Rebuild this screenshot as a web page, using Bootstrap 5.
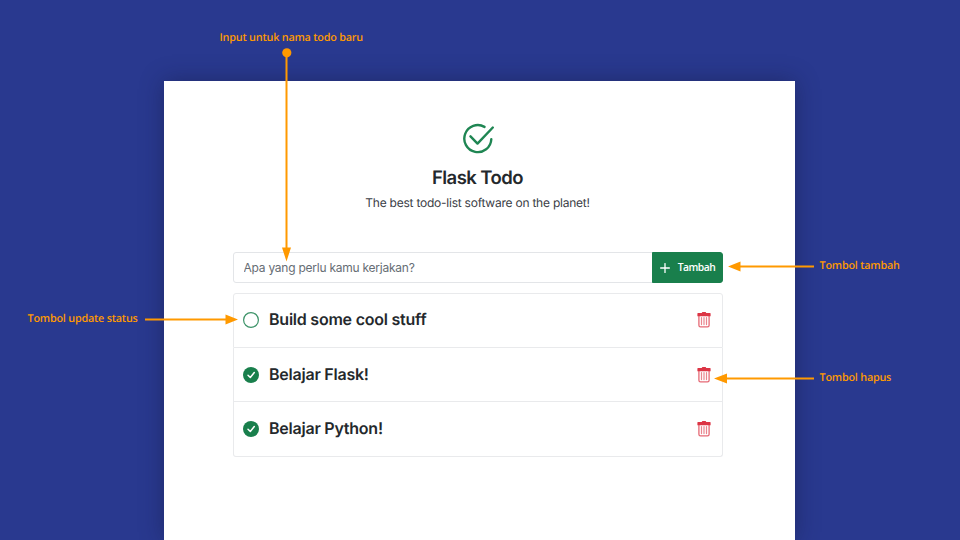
<!DOCTYPE html>
<html lang="id">
<head>
<meta charset="utf-8">
<meta name="viewport" content="width=device-width, initial-scale=1">
<title>Flask Todo</title>
<link href="https://cdn.jsdelivr.net/npm/bootstrap@5.3.0/dist/css/bootstrap.min.css" rel="stylesheet">
<style>
body{width:960px;height:540px;background:#29398f;font-family:Inter,"Liberation Sans",sans-serif;overflow:hidden;text-rendering:geometricPrecision}
.sheet{width:631px;height:459px;margin:81px 0 0 164px;padding:42px 72.5px 0 68.5px;box-shadow:0 0 22px rgba(20,25,60,.45)}
.logo{width:32px;height:32px;color:#1f8653}
.app-title{font-size:18.5px;line-height:22px;font-weight:600;letter-spacing:-.55px;margin:12px 0 0;color:#24282c}
.tagline{font-size:12px;line-height:16px;letter-spacing:-.23px;margin:6px 0 0;color:#3b4046}
.new-todo{height:31px;margin-top:41px}
.new-todo .form-control{font-size:12px;padding:0 10px;border:1px solid #e3e5e8;border-radius:3px;letter-spacing:-.24px;line-height:29px}
.new-todo .form-control::placeholder{color:#666d74}
.new-todo .btn{width:71px;padding:0 0 0 1px;font:600 10.3px/29px "Open Sans",sans-serif;letter-spacing:-.5px;background:#197f4c;border-color:#197f4c;border-radius:3px}
.todos{margin-top:10px;--bs-list-group-border-color:#e9eaec;--bs-list-group-border-radius:3px}
.todos .list-group-item{height:54.3px;padding:0 11px 0 9.5px;color:#24282c}
.todos .list-group-item:first-child{height:55px;padding-bottom:1px}
.todo-name{font-size:16px;line-height:22px;font-weight:600;letter-spacing:-.23px;margin:-2px 0 0 10px}
.state{color:#197f4c}
.bin{color:#dc3545}
.notes{left:0;top:0;pointer-events:none}
.notes text{font-family:"Open Sans",sans-serif;font-weight:600;font-size:10.8px;letter-spacing:-.2px;fill:#ff9900}
</style>
<script src="https://cdn.jsdelivr.net/npm/bootstrap@5.3.0/dist/js/bootstrap.bundle.min.js"></script>
</head>
<body class="d-flex position-relative">
<svg class="d-none">
<symbol id="trash" viewBox="0 0 14 16"><path d="M.4 1.6Q.4 1 1 1H4.800Q5 0 5.600 0h2.800Q9 0 9.200 1H13q.6 0 .6.6V4.200H.4z" fill="currentColor"/><path d="M1.900 3.800v9.400q0 1.700 1.600 1.700h7q1.600 0 1.600-1.700V3.800" fill="none" stroke="currentColor" stroke-width="1.3" stroke-opacity=".75"/><path d="M4.500 5.600v7M7 5.600v7M9.500 5.600v7" fill="none" stroke="currentColor" stroke-width="1.2" stroke-opacity=".6" stroke-linecap="round"/></symbol>
<symbol id="done" viewBox="0 0 16 16"><circle cx="8" cy="8" r="8" fill="currentColor"/><path d="M5 8.2 7.3 10.5 11.3 5.5" fill="none" stroke="#fff" stroke-width="1.5" stroke-linecap="round" stroke-linejoin="round"/></symbol>
<symbol id="open" viewBox="0 0 16 16"><circle cx="8" cy="8" r="7.400" fill="none" stroke="currentColor" stroke-width="1.2" stroke-opacity=".85"/></symbol>
</svg>
<main class="sheet bg-white flex-shrink-0">
<header class="d-flex flex-column align-items-center text-center">
<svg class="logo" viewBox="0 0 32 32" fill="none" stroke="currentColor" stroke-width="2.4" stroke-linecap="round" stroke-linejoin="round"><path d="M22.500 3.900A13.500 13.500 0 1 0 29.300 16.200M8.500 13.300l7 7.300L30.800 4.500"/></svg>
<h1 class="app-title">Flask Todo</h1>
<p class="tagline">The best todo-list software on the planet!</p>
</header>
<form class="new-todo input-group flex-nowrap">
<input class="form-control" type="text" placeholder="Apa yang perlu kamu kerjakan?" aria-label="Nama todo">
<button class="btn btn-success d-flex align-items-center justify-content-center gap-2" type="button"><svg width="10" height="10" viewBox="0 0 10 10" stroke="#fff" stroke-width="1.3" stroke-linecap="round"><path d="M.6 5h8.800M5 .6v8.800"/></svg>Tambah</button>
</form>
<ul class="todos list-group">
<li class="list-group-item d-flex align-items-center"><svg class="state" width="16" height="16"><use href="#open"/></svg><span class="todo-name">Build some cool stuff</span><svg class="bin ms-auto" width="14" height="16"><use href="#trash"/></svg></li>
<li class="list-group-item d-flex align-items-center"><svg class="state" width="16" height="16"><use href="#done"/></svg><span class="todo-name">Belajar Flask!</span><svg class="bin ms-auto" width="14" height="16"><use href="#trash"/></svg></li>
<li class="list-group-item d-flex align-items-center"><svg class="state" width="16" height="16"><use href="#done"/></svg><span class="todo-name">Belajar Python!</span><svg class="bin ms-auto" width="14" height="16"><use href="#trash"/></svg></li>
</ul>
</main>
<svg class="notes position-absolute" width="960" height="540" viewBox="0 0 960 540">
<g fill="none" stroke="#ff9900" stroke-width="2"><path d="M286.5 53V249M145 319.5H226M814 266.5H740M814 378.5H727"/></g>
<g fill="#ff9900"><circle cx="286.8" cy="52.8" r="4.6"/><path d="M282 247.5h9L286.5 261.500zM225.500 314.500v10L238 319.500zM740.500 261.500v10L728 266.500zM727 373.500v10L714 378.500z"/></g>
<text x="219.500" y="41">Input untuk nama todo baru</text>
<text x="27.500" y="322">Tombol update status</text>
<text x="819.500" y="269">Tombol tambah</text>
<text x="819.500" y="381">Tombol hapus</text>
</svg>
</body>
</html>
